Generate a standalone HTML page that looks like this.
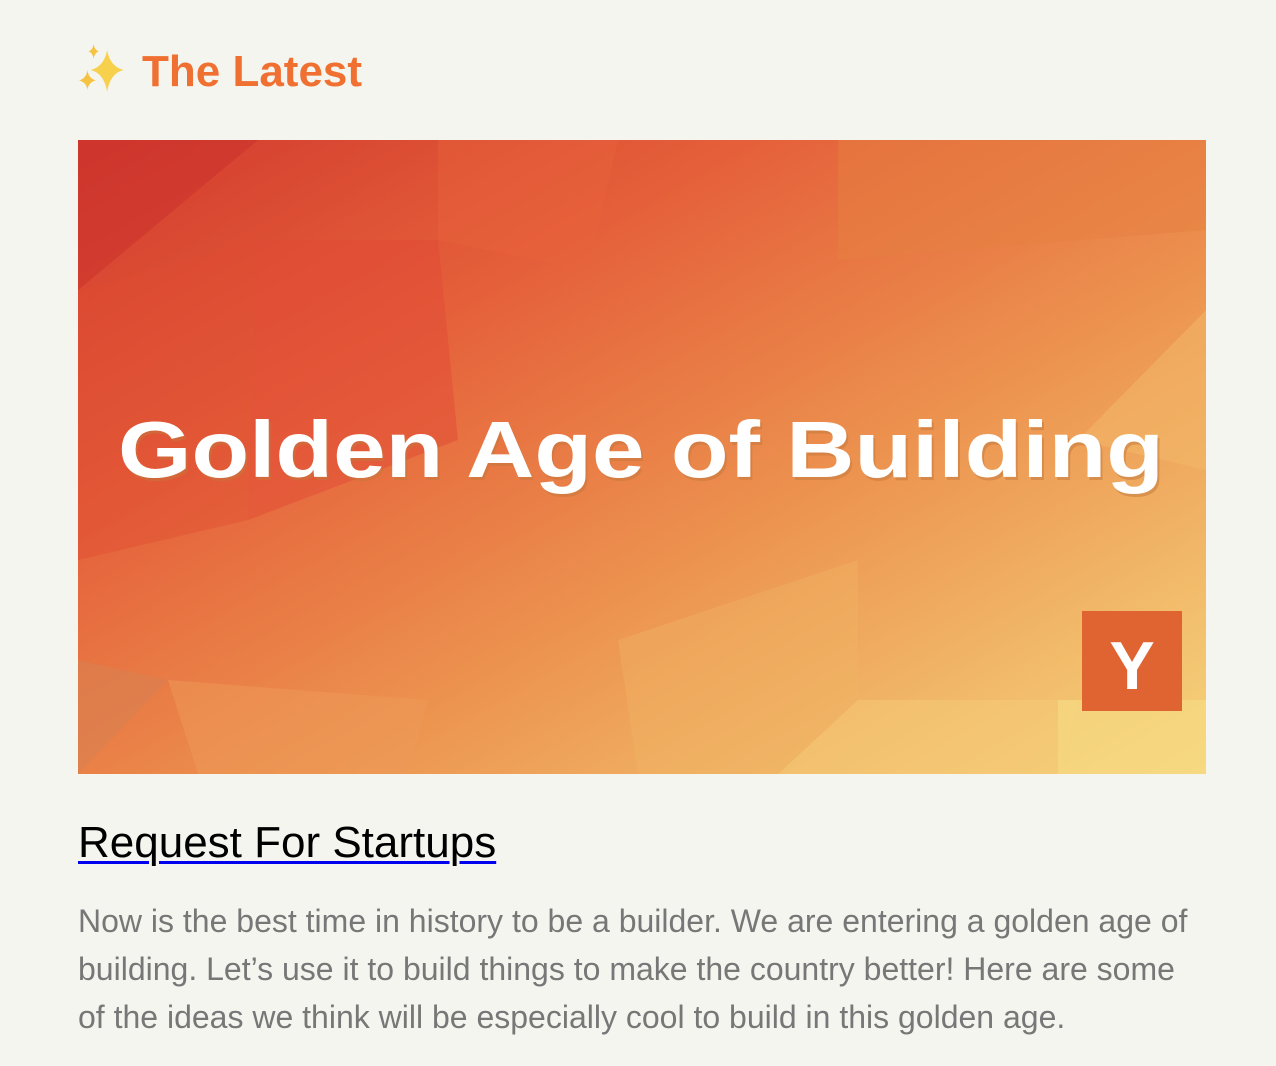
<!DOCTYPE html>
<html><head><meta charset="utf-8"><style>
html,body{margin:0;padding:0;background:#f5f5f0;width:1276px;height:1066px;overflow:hidden}
.h{position:absolute;left:76px;top:42px;font:bold 44px "Liberation Sans",sans-serif;color:#ef7030;white-space:nowrap}
.h svg{vertical-align:-12px;margin-right:10px}
.img{position:absolute;left:78px;top:140px;width:1128px;height:634px}
.t{position:absolute;left:78px;top:818px;font:44px "Liberation Sans",sans-serif;color:#000;text-decoration:underline;text-decoration-color:#0000ee;text-decoration-thickness:3px;text-underline-offset:4px;white-space:nowrap}
.p{position:absolute;left:78px;top:897px;width:1128px;font:32px/48px "Liberation Sans",sans-serif;color:#777}
</style></head><body>
<div class="h"><svg width="56" height="56" viewBox="0 0 54 54"><path d="M30 8 Q33 24 46 27 Q33 30 30 48 Q27 30 14 27 Q27 24 30 8Z" fill="#f7d04e"/><path d="M11 27 Q12 35 19 37 Q12 39 11 46 Q10 39 3 37 Q10 35 11 27Z" fill="#f5c242"/><path d="M17 2 Q18 8 22 9 Q18 10 17 16 Q16 10 12 9 Q16 8 17 2Z" fill="#f5c242"/></svg>The Latest</div>
<svg class="img" viewBox="0 0 1128 634" preserveAspectRatio="none">
<defs><linearGradient id="g" x1="0" y1="0" x2="1" y2="1"><stop offset="0" stop-color="#d23a2e"/><stop offset="0.3" stop-color="#e5603a"/><stop offset="0.6" stop-color="#ec924f"/><stop offset="1" stop-color="#f5d57c"/></linearGradient></defs>
<rect width="1128" height="634" fill="url(#g)"/>
<polygon points="0,0 180,0 0,150" fill="#c9302b" opacity=".5"/>
<polygon points="180,100 360,100 380,300 170,380" fill="#e14a35" opacity=".5"/>
<polygon points="360,0 540,0 510,130 360,100" fill="#e8643c" opacity=".4"/>
<polygon points="760,0 1128,0 1128,90 760,120" fill="#e6803f" opacity=".5"/>
<polygon points="0,150 180,100 170,380 0,420" fill="#df4a33" opacity=".4"/>
<polygon points="0,520 90,540 0,634" fill="#d98050" opacity=".6"/>
<polygon points="90,540 350,560 330,634 120,634" fill="#ee9a58" opacity=".5"/>
<polygon points="540,500 780,420 780,560 700,634 560,634" fill="#f1b565" opacity=".4"/>
<polygon points="780,560 1000,560 980,634 700,634" fill="#f5cc78" opacity=".5"/>
<polygon points="980,560 1128,560 1128,634 980,634" fill="#f7dc86" opacity=".6"/>
<polygon points="1128,170 1128,330 1000,300" fill="#f3ba6a" opacity=".5"/>
<text x="42" y="340" font-family="Liberation Sans,sans-serif" font-weight="bold" font-size="80" fill="#c3793e" opacity=".5" textLength="1046" lengthAdjust="spacingAndGlyphs">Golden Age of Building</text>
<text x="40" y="337" font-family="Liberation Sans,sans-serif" font-weight="bold" font-size="80" fill="#fff" textLength="1046" lengthAdjust="spacingAndGlyphs">Golden Age of Building</text>
<rect x="1004" y="471" width="100" height="100" fill="#df6431"/>
<text x="1054" y="549" text-anchor="middle" font-family="Liberation Sans,sans-serif" font-weight="bold" font-size="68" fill="#fff">Y</text>
</svg>
<div class="t">Request For Startups</div>
<div class="p">Now is the best time in history to be a builder. We are entering a golden age of building. Let’s use it to build things to make the country better! Here are some of the ideas we think will be especially cool to build in this golden age.</div>
</body></html>
